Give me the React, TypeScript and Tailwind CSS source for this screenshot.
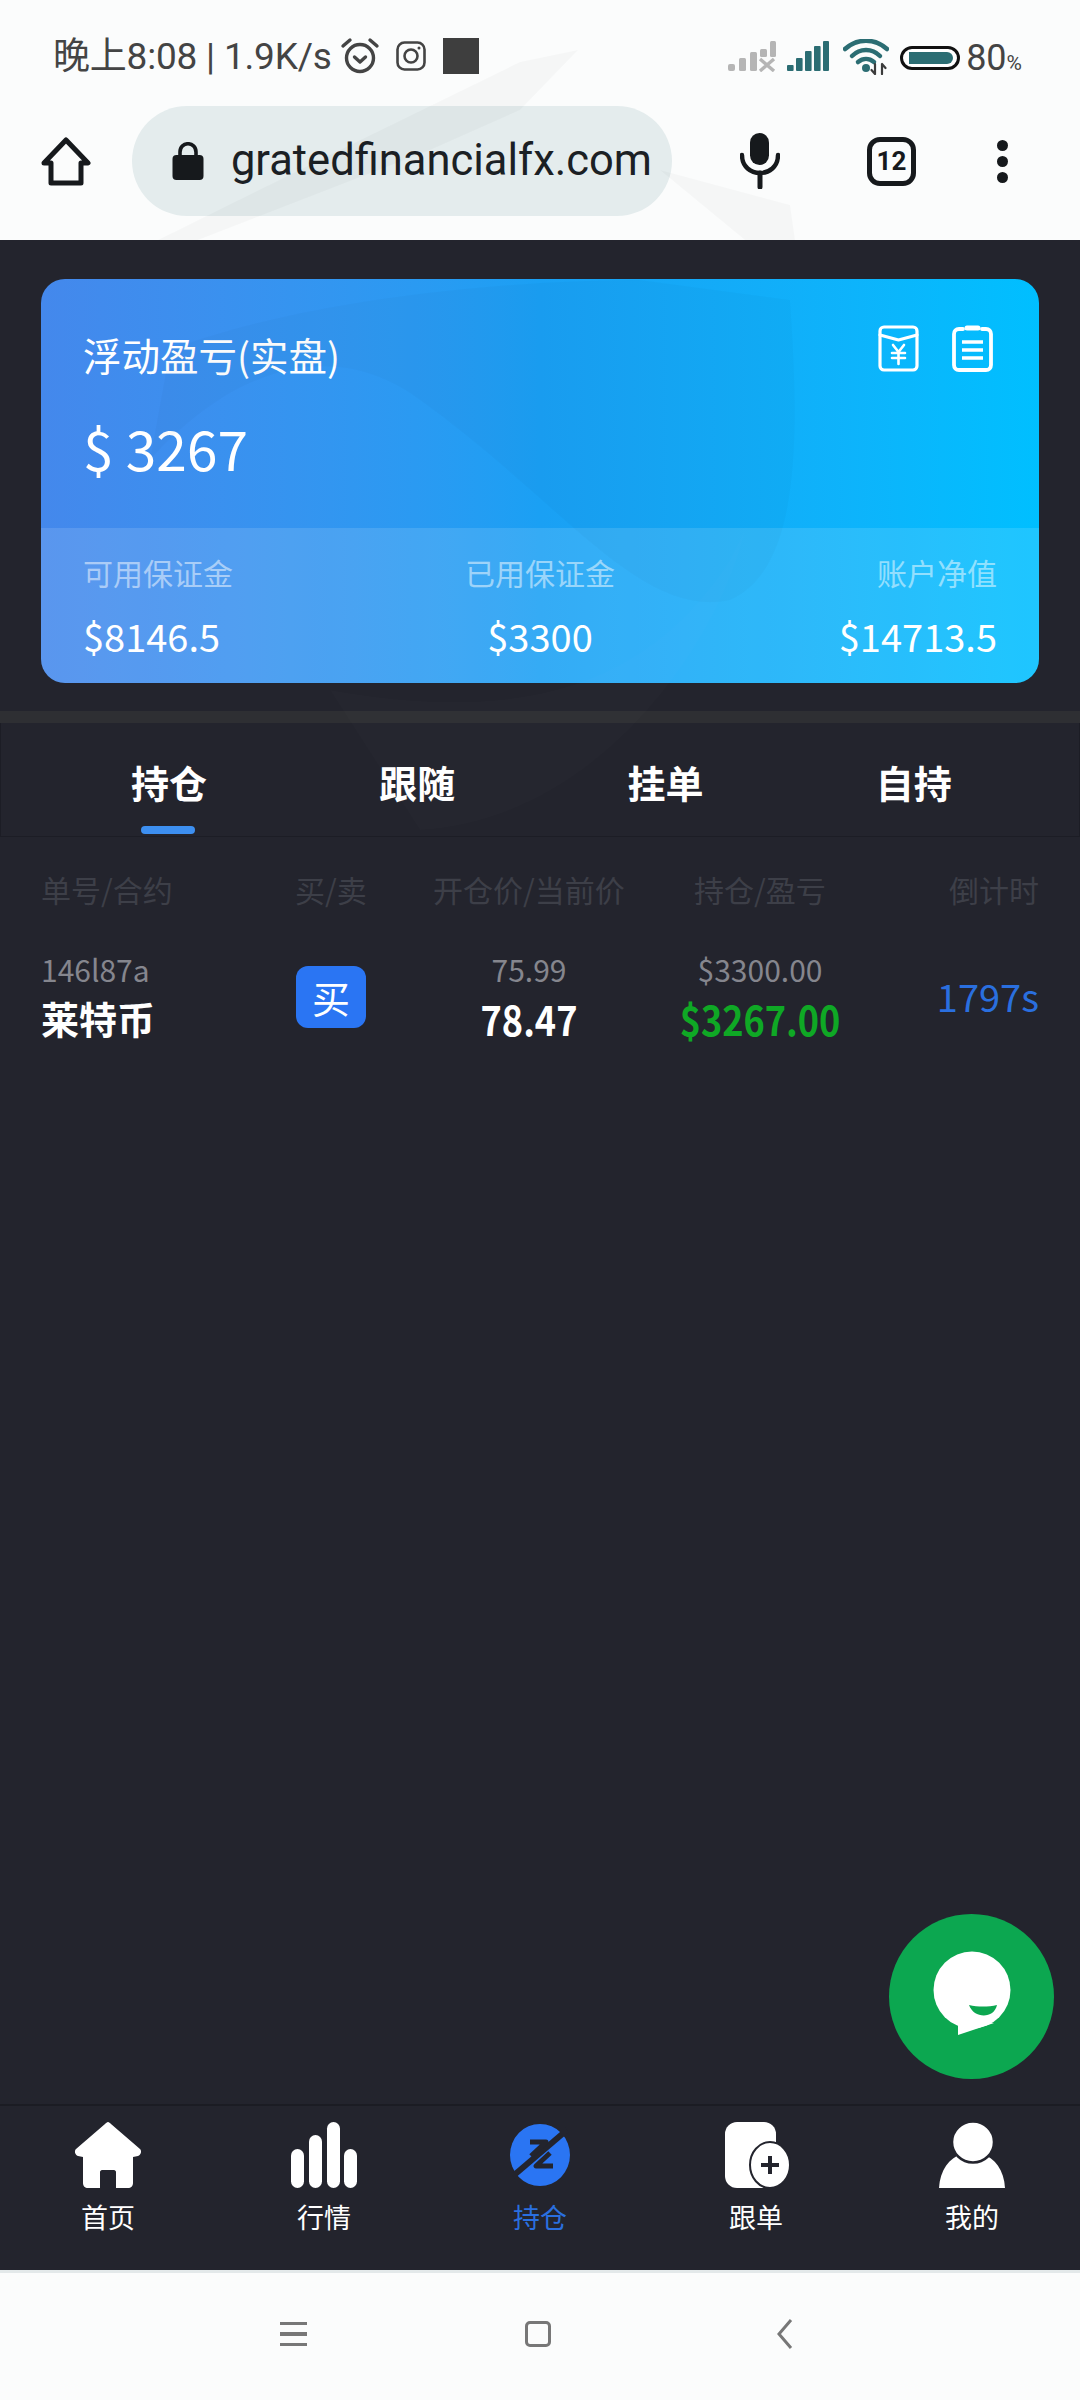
import React from "react";

const CJK = '"Noto Sans CJK SC", "Noto Sans", sans-serif';

function Watermark() {
  return (
    <svg className="absolute left-0 top-0 pointer-events-none" width="1080" height="1100" viewBox="0 0 1080 1100">
      <path d="M578 50 L520 62 L340 150 L158 240 L198 240 L430 150 L520 110 Z" fill="#000" opacity="0.025" />
      <path d="M660 170 L790 205 L795 240 L745 240 Z" fill="#000" opacity="0.025" />
      <path d="M150 460 C240 360 340 340 420 400 C560 500 640 620 730 600 C800 570 800 440 790 300 L640 280 C500 280 300 300 170 350 Z" fill="#000" opacity="0.02" />
      <path d="M330 690 C500 720 640 700 730 560 L745 530 C720 640 600 820 420 830 Z" fill="#fff" opacity="0.01" />
    </svg>
  );
}

function Alarm() {
  return (
    <svg width="40" height="40" viewBox="0 0 40 40" fill="none" stroke="#444" strokeWidth="3.4" strokeLinecap="round" strokeLinejoin="round">
      <circle cx="20" cy="22" r="13.5" />
      <path d="M14.5 21 L20 26 L25.5 21" />
      <path d="M3 10 L10 4" />
      <path d="M37 10 L30 4" />
    </svg>
  );
}

function Insta() {
  return (
    <svg width="30" height="30" viewBox="0 0 30 30" fill="none" stroke="#444" strokeWidth="2.6">
      <rect x="1.5" y="1.5" width="27" height="27" rx="7" />
      <circle cx="15" cy="15" r="6.5" />
      <circle cx="23" cy="7" r="1.5" fill="#444" stroke="none" />
    </svg>
  );
}

function SignalX() {
  const c = "#b5b5b5";
  return (
    <svg width="48" height="32" viewBox="0 0 48 32">
      <rect x="0" y="24" width="7" height="7" rx="2" fill={c} />
      <rect x="11" y="18" width="7" height="13" rx="1.5" fill={c} />
      <rect x="22" y="12" width="7" height="19" rx="1.5" fill={c} />
      <rect x="32" y="9" width="7" height="8" rx="1.5" fill={c} />
      <rect x="42" y="1" width="6" height="16" rx="1.5" fill={c} />
      <path d="M32 19 L46 31 M46 19 L32 31" stroke={c} strokeWidth="3.4" />
    </svg>
  );
}

function SignalFull() {
  const c = "#2b6d73";
  return (
    <svg width="42" height="32" viewBox="0 0 42 32">
      <rect x="0" y="25" width="6.6" height="6" rx="1" fill={c} />
      <rect x="9" y="18" width="6.6" height="13" rx="1" fill={c} />
      <rect x="18" y="11" width="6.6" height="20" rx="1" fill={c} />
      <rect x="27" y="6" width="6.6" height="25" rx="1" fill={c} />
      <rect x="36" y="1" width="6" height="30" rx="1" fill={c} />
    </svg>
  );
}

function Wifi() {
  return (
    <svg width="46" height="36" viewBox="0 0 46 36" fill="none" stroke="#2b6d73" strokeWidth="4.5" strokeLinecap="round">
      <path d="M2 10 C14 -1 32 -1 44 10" />
      <path d="M9 17 C17 9 29 9 37 17" />
      <path d="M15 23 C20 19 26 19 31 23" />
      <circle cx="23" cy="29" r="4" fill="#2b6d73" stroke="none" />
      <path d="M32 25 V35 M28.5 31 L32 35 M39 25 V35 M39 25 L42.5 29" stroke="#3b3b3b" strokeWidth="2.2" />
    </svg>
  );
}

function Battery() {
  return (
    <div className="flex items-center w-[60px] h-[24px] rounded-full border-[3px] border-[#111] p-[3px] bg-white">
      <div className="h-full w-[44px] bg-[#2b6d73] rounded-r-[6px] ml-[3px]" />
    </div>
  );
}

function StatusBar() {
  return (
    <div className="relative flex items-center h-[106px] pt-[6px] pl-[53px] pr-[58px] text-[#444]" style={{ fontFamily: `Roboto, ${CJK}` }}>
      <div className="text-[37px] leading-none tracking-[-0.2px] flex items-center whitespace-nowrap">晚上8:08 | 1.9K/s</div>
      <div className="ml-[8px]"><Alarm /></div>
      <div className="ml-[16px]"><Insta /></div>
      <div className="ml-[17px] w-[36px] h-[36px] bg-[#3e3e3e]" />
      <div className="ml-auto flex items-center">
        <SignalX />
        <div className="ml-[11px]"><SignalFull /></div>
        <div className="ml-[14px] mt-[1px]"><Wifi /></div>
        <div className="ml-[11px] mt-[3px]"><Battery /></div>
        <div className="ml-[6px] text-[36px] leading-none mt-[3px] whitespace-nowrap">80<span className="text-[21px]">%</span></div>
      </div>
    </div>
  );
}

function UrlBar() {
  return (
    <div className="relative flex items-center h-[134px] pb-[24px]">
      <div className="ml-[41px] w-[50px] h-[48px]">
        <svg width="50" height="50" viewBox="0 0 50 50" fill="none" stroke="#16191c" strokeWidth="5" strokeLinejoin="round">
          <path d="M25 3 L47 26 H40 V46 H10 V26 H3 Z" />
        </svg>
      </div>
      <div className="ml-[41px] w-[540px] h-[110px] rounded-full bg-[#e4eced] flex items-center pl-[40px] overflow-hidden">
        <svg width="32" height="38" viewBox="0 0 32 38" className="shrink-0">
          <path d="M8 16 V10 C8 -1 24 -1 24 10 V16" fill="none" stroke="#16191c" strokeWidth="3.6" />
          <rect x="0.5" y="13" width="31" height="25" rx="4" fill="#16191c" />
        </svg>
        <div className="ml-[25px] w-[423px] flex justify-end text-[43.5px] leading-none text-[#1b2024] whitespace-nowrap" style={{ fontFamily: "Roboto, sans-serif" }}>
          gratedfinancialfx.com
        </div>
      </div>
      <svg className="ml-[68px]" width="40" height="56" viewBox="0 0 40 56" fill="none">
        <rect x="10" y="0" width="19" height="32" rx="9.5" fill="#16191c" />
        <path d="M2 22 C2 46 38 46 38 22" stroke="#16191c" strokeWidth="4.4" strokeLinecap="round" />
        <path d="M20 40 V54" stroke="#16191c" strokeWidth="5" strokeLinecap="round" />
      </svg>
      <div className="ml-[87px] w-[49px] h-[49px] rounded-[13px] border-[5px] border-[#16191c] flex items-center justify-center text-[26px] leading-none font-bold text-[#16191c]" style={{ fontFamily: "Roboto, sans-serif" }}>12</div>
      <div className="ml-[81px] flex flex-col gap-[5px]">
        <div className="w-[11px] h-[11px] rounded-full bg-[#16191c]" />
        <div className="w-[11px] h-[11px] rounded-full bg-[#16191c]" />
        <div className="w-[11px] h-[11px] rounded-full bg-[#16191c]" />
      </div>
    </div>
  );
}

function Card() {
  return (
    <div className="mx-[41px] mt-[39px] h-[404px] rounded-[24px] overflow-hidden flex flex-col bg-gradient-to-r from-[#4488ec] via-[#1aa0f4] to-[#00bfff] text-white">
      <div className="h-[249px] pl-[42px] pr-[46px] relative">
        <div className="flex justify-between pt-[45px]">
          <div className="text-[38.5px] leading-[60px]">浮动盈亏(实盘)</div>
          <div className="flex gap-[33px] h-[47px] mt-[1px]">
            <svg width="41" height="47" viewBox="0 0 41 47" fill="none" stroke="#fff" strokeWidth="3.2" strokeLinejoin="round" strokeLinecap="round">
              <rect x="2" y="2" width="37" height="43" rx="4" />
              <path d="M2 10 L20.5 15 L39 10" />
              <path d="M15 20 L20.5 27 L26 20 M20.5 27 V39 M14 28 H27 M14 33 H27" strokeWidth="2.6" />
            </svg>
            <svg width="41" height="47" viewBox="0 0 41 47" fill="none" stroke="#fff" strokeWidth="3.8" strokeLinecap="round">
              <path d="M11 4 H7 C4 4 2 6 2 9 V40 C2 43 4 45 7 45 H34 C37 45 39 43 39 40 V9 C39 6 37 4 34 4 H30" />
              <path d="M15 3 H26" strokeWidth="5" />
              <path d="M10 17 H31 M10 25 H31 M10 33 H31" strokeWidth="3.6" strokeLinecap="butt" />
            </svg>
          </div>
        </div>
        <div className="mt-[28px] text-[55px] leading-[70px]">$ 3267</div>
      </div>
      <div className="h-[155px] bg-white/12 px-[42px] pr-[42px] grid grid-cols-3 pt-[24px]">
        <div>
          <div className="text-[30px] leading-[40px] text-white/50">可用保证金</div>
          <div className="mt-[22px] text-[38px] leading-[44px]">$8146.5</div>
        </div>
        <div className="text-center">
          <div className="text-[30px] leading-[40px] text-white/50">已用保证金</div>
          <div className="mt-[22px] text-[38px] leading-[44px]">$3300</div>
        </div>
        <div className="text-right">
          <div className="text-[30px] leading-[40px] text-white/50">账户净值</div>
          <div className="mt-[22px] text-[38px] leading-[44px]">$14713.5</div>
        </div>
      </div>
    </div>
  );
}

function Tabs() {
  const items = ["持仓", "跟随", "挂单", "自持"];
  return (
    <div className="h-[114px] grid grid-cols-4 pl-[44px] pr-[41px] border-b border-[#1c1d25] border-x">
      {items.map((t, i) => (
        <div key={t} className="relative flex justify-center pt-[35px]">
          <span className="text-[38px] leading-[48px] font-bold text-white">{t}</span>
          {i === 0 && <div className="absolute left-[96px] top-[103px] w-[54px] h-[8px] rounded-full bg-[#3d8ff0]" />}
        </div>
      ))}
    </div>
  );
}

function Table() {
  const cols = "grid grid-cols-[230px_120px_276px_186px_186px] px-[41px]";
  return (
    <div>
      <div className={`${cols} mt-[31px] text-[30px] leading-[42px] text-[#3d3f48]`}>
        <div>单号/合约</div>
        <div className="text-center">买/卖</div>
        <div className="text-center whitespace-nowrap">开仓价/当前价</div>
        <div className="text-center">持仓/盈亏</div>
        <div className="text-right">倒计时</div>
      </div>
      <div className={`${cols} mt-[38px] items-center`}>
        <div>
          <div className="text-[30px] leading-[42px] text-[#85868e]">146l87a</div>
          <div className="mt-[3px] text-[38px] leading-[50px] font-bold text-white">莱特币</div>
        </div>
        <div className="flex justify-center">
          <div className="w-[70px] h-[62px] rounded-[12px] bg-[#2a75f3] flex items-center justify-center text-[38px] leading-none text-white mt-[2px]">买</div>
        </div>
        <div className="text-center">
          <div className="text-[30px] leading-[42px] text-[#85868e]">75.99</div>
          <div className="mt-[3px] text-[41px] leading-[50px] font-bold text-white scale-x-[0.88]">78.47</div>
        </div>
        <div className="text-center">
          <div className="text-[30px] leading-[42px] text-[#85868e]">$3300.00</div>
          <div className="mt-[3px] text-[41px] leading-[50px] font-bold text-[#0fa825] whitespace-nowrap scale-x-[0.88]">$3267.00</div>
        </div>
        <div className="text-right text-[38px] leading-[48px] text-[#2a6fdf]">1797s</div>
      </div>
    </div>
  );
}

function Fab() {
  return (
    <div className="absolute left-[889px] top-[1914px] w-[165px] h-[165px] rounded-full bg-[#0ca750] flex items-center justify-center">
      <svg width="100" height="100" viewBox="0 0 100 100">
        <circle cx="50" cy="43" r="38.5" fill="#fff" />
        <path d="M36 72 L36 88 L72 76 Z" fill="#fff" />
        <path d="M47 58 C56 60 66 60 75 58 C72 72 52 72 47 58 Z" fill="#0ca750" />
      </svg>
    </div>
  );
}

function NavIcon({ i }: { i: number }) {
  const c = "#ffffff";
  const bg = "#23242d";
  if (i === 0)
    return (
      <svg width="70" height="66" viewBox="0 0 70 66">
        <path d="M35 0 C36 0 37 1 38 2 L67 27 C69 29 68 33 65 34 L60 35 V61 C60 64 58 66 55 66 H43 V50 C43 49 42 48 41 48 H29 C28 48 27 49 27 50 V66 H15 C12 66 10 64 10 61 V35 L5 34 C2 33 1 29 3 27 L32 2 C33 1 34 0 35 0 Z" fill={c} />
      </svg>
    );
  if (i === 1)
    return (
      <svg width="70" height="66" viewBox="0 0 70 66">
        <rect x="2" y="27" width="13" height="39" rx="6.5" fill={c} />
        <rect x="20" y="13" width="13" height="53" rx="6.5" fill={c} />
        <rect x="38" y="0" width="13" height="66" rx="6.5" fill={c} />
        <rect x="55" y="27" width="13" height="39" rx="6.5" fill={c} />
      </svg>
    );
  if (i === 2)
    return (
      <svg width="70" height="66" viewBox="0 0 70 66">
        <ellipse cx="35" cy="33" rx="30" ry="31" fill="#2a75f3" />
        <path d="M8 54 L62 8" stroke={bg} strokeWidth="6" />
        <path d="M25 20 H41 L26 34" fill="none" stroke={bg} strokeWidth="5" strokeLinejoin="round" />
        <path d="M45 31 L31 44 H48" fill="none" stroke={bg} strokeWidth="5" strokeLinejoin="round" />
      </svg>
    );
  if (i === 3)
    return (
      <svg width="70" height="66" viewBox="0 0 70 66">
        <rect x="4" y="0" width="51" height="66" rx="12" fill={c} />
        <ellipse cx="49" cy="43" rx="20" ry="23" fill={c} stroke={bg} strokeWidth="2" />
        <path d="M49 34 V52 M40 43 H58" stroke={bg} strokeWidth="4" />
      </svg>
    );
  return (
    <svg width="70" height="66" viewBox="0 0 70 66">
      <path d="M2 66 C3 48 12 36 25 32 H45 C58 36 67 48 68 66 Z" fill={c} />
      <ellipse cx="36" cy="20" rx="21" ry="20.5" fill={c} stroke={bg} strokeWidth="2.5" />
    </svg>
  );
}

function BottomNav() {
  const items = ["首页", "行情", "持仓", "跟单", "我的"];
  return (
    <div className="mt-auto h-[166px] border-t-2 border-[#1b1c23] flex pt-[16px]">
      {items.map((t, i) => (
        <div key={t} className="flex-1 flex flex-col items-center">
          <NavIcon i={i} />
          <div className={`mt-[11px] text-[27px] leading-[36px] ${i === 2 ? "text-[#2a6fdf]" : "text-white"}`}>{t}</div>
        </div>
      ))}
    </div>
  );
}

function SystemBar() {
  return (
    <div className="h-[130px] bg-[#fbfcfc] border-t-[3px] border-[#e3e9ea] flex items-center pb-[5px]">
      <div className="ml-[280px] flex flex-col gap-[7px] w-[27px]">
        <div className="h-[3.5px] bg-[#777]" />
        <div className="h-[3.5px] bg-[#777]" />
        <div className="h-[3.5px] bg-[#777]" />
      </div>
      <div className="ml-[218px] w-[26px] h-[26px] rounded-[5px] border-[3px] border-[#777]" />
      <svg className="ml-[226px]" width="16" height="30" viewBox="0 0 16 30" fill="none" stroke="#777" strokeWidth="3">
        <path d="M14 1 L2 15 L14 29" />
      </svg>
    </div>
  );
}

export default function App() {
  return (
    <div className="relative w-[1080px] h-[2400px] overflow-hidden flex flex-col bg-[#fbfcfc]" style={{ fontFamily: CJK }}>
      <div className="h-[240px] shrink-0">
        <StatusBar />
        <UrlBar />
      </div>
      <div className="flex-1 min-h-0 flex flex-col bg-[#23242d]">
        <Card />
        <div className="mt-[28px] h-[12px] bg-[#2e2f33]" />
        <Tabs />
        <Table />
        <BottomNav />
      </div>
      <SystemBar />
      <Watermark />
      <Fab />
    </div>
  );
}
